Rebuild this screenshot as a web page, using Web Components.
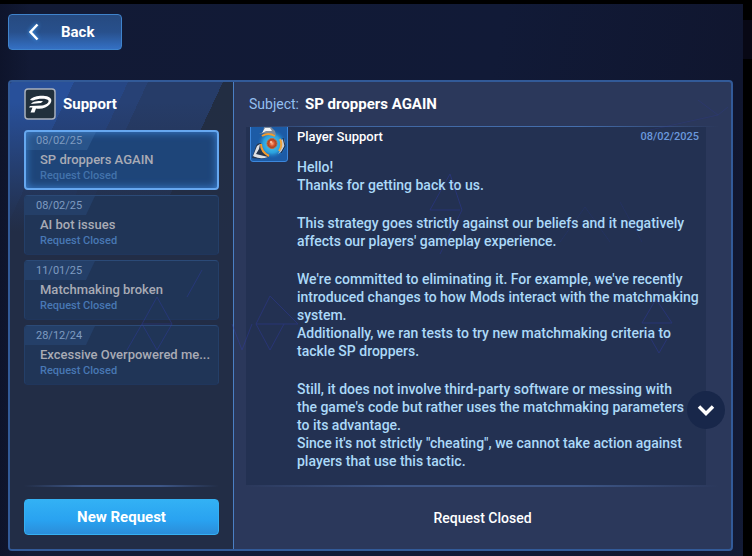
<!DOCTYPE html>
<html lang="en">
<head>
<meta charset="utf-8">
<meta name="viewport" content="width=device-width, initial-scale=1">
<title>Support</title>
<style>
	html, body {
		margin: 0;
	}
	body {
		font-family: Roboto, "Liberation Sans", sans-serif;
		font-size: 14px;
		font-weight: 500;
		color: #fff;
		background: linear-gradient(#000 20px, #080815 20px 59px, #000 59px);
	}
</style>
</head>
<body>
<support-screen>
	<back-button slot="nav">Back</back-button>
	<support-panel>
		<span slot="title">Support</span>
		<ticket-card slot="tickets" selected>
			<span slot="date">08/02/25</span>
			<span slot="subject">SP droppers AGAIN</span>
			<span slot="status">Request Closed</span>
		</ticket-card>
		<ticket-card slot="tickets">
			<span slot="date">08/02/25</span>
			<span slot="subject">AI bot issues</span>
			<span slot="status">Request Closed</span>
		</ticket-card>
		<ticket-card slot="tickets">
			<span slot="date">11/01/25</span>
			<span slot="subject">Matchmaking broken</span>
			<span slot="status">Request Closed</span>
		</ticket-card>
		<ticket-card slot="tickets">
			<span slot="date">28/12/24</span>
			<span slot="subject">Excessive Overpowered me...</span>
			<span slot="status">Request Closed</span>
		</ticket-card>
		<span slot="action">New Request</span>
		<span slot="subject">SP droppers AGAIN</span>
		<support-message slot="thread">
			<span slot="author">Player Support</span>
			<span slot="date">08/02/2025</span>
			<div>Hello!<br>Thanks for getting back to us.</div>
			<div>This strategy goes strictly against our beliefs and it negatively<br>affects our players' gameplay experience.</div>
			<div>We're committed to eliminating it. For example, we've recently<br>introduced changes to how Mods interact with the matchmaking<br>system.<br>Additionally, we ran tests to try new matchmaking criteria to<br>tackle SP droppers.</div>
			<div>Still, it does not involve third-party software or messing with<br>the game's code but rather uses the matchmaking parameters<br>to its advantage.<br>Since it's not strictly "cheating", we cannot take action against<br>players that use this tactic.</div>
		</support-message>
		<span slot="footer">Request Closed</span>
	</support-panel>
</support-screen>

<script>
/* Full window frame: black edges, navy background */
class SupportScreen extends HTMLElement {
	constructor() {
		super();
		this.attachShadow({ mode: "open" });
		this.shadowRoot.innerHTML = `
      <style>
        :host {
          display: flex;
          flex-direction: column;
          box-sizing: border-box;
          min-height: 100vh;
          margin-right: 9px;
          border-top: 4px solid #000;
          padding: 10px 10px 5px 8px;
          gap: 30px;
          background:
            linear-gradient(90deg, rgba(10, 14, 34, 0.5), transparent 30px),
            linear-gradient(100deg, #121a35, #111a37 60%, #10162f 90%, #131b36);
        }
        nav {
          display: flex;
        }
        main {
          display: flex;
          flex: 1;
        }
      </style>
      <nav><slot name="nav"></slot></nav>
      <main><slot></slot></main>
    `;
	}
}

class BackButton extends HTMLElement {
	constructor() {
		super();
		this.attachShadow({ mode: "open" });
		this.shadowRoot.innerHTML = `
      <style>
        :host {
          display: block;
        }
        button {
          display: flex;
          align-items: center;
          gap: 18px;
          box-sizing: border-box;
          width: 114px;
          height: 36px;
          padding: 0 16px;
          font: inherit;
          font-size: 15px;
          font-weight: 700;
          color: #fff;
          border: 1px solid #3f83cc;
          border-radius: 4px;
          background: linear-gradient(#264a80, #28508c 50%, #3470c4);
          cursor: pointer;
        }
        svg {
          filter: drop-shadow(0 0 2px #3fa4ff);
        }
      </style>
      <button type="button">
        <svg width="18" height="20" viewBox="0 0 18 20" aria-hidden="true">
          <path d="M12.500 2.500L5.500 10L12.500 17.500" fill="none" stroke="#fff" stroke-width="2.500"/>
        </svg>
        <slot></slot>
      </button>
    `;
	}
}

class TicketCard extends HTMLElement {
	constructor() {
		super();
		this.attachShadow({ mode: "open" });
		this.shadowRoot.innerHTML = `
      <style>
        :host {
          display: block;
        }
        button {
          display: flex;
          flex-direction: column;
          align-items: flex-start;
          box-sizing: border-box;
          width: 100%;
          height: 60px;
          padding: 0;
          overflow: hidden;
          font: inherit;
          text-align: left;
          color: #a9abb5;
          border: 1px solid #243f68;
          border-top-color: #2b4a77;
          border-bottom-color: #20365c;
          border-radius: 4px;
          background: #203557;
          cursor: pointer;
        }
        .date {
          box-sizing: border-box;
          width: 70px;
          height: 19px;
          padding-left: 11px;
          font-size: 11px;
          font-weight: 400;
          line-height: 20px;
          color: #7f9bc0;
          background: #243f68;
          clip-path: polygon(0 0, 100% 0, 61px 100%, 0 100%);
        }
        .subject {
          padding-left: 15px;
          font-size: 13px;
          line-height: 20px;
          white-space: nowrap;
        }
        .status {
          padding-left: 15px;
          font-size: 11px;
          line-height: 12px;
          color: #4878b4;
        }
        :host([selected]) button {
          border: 2px solid #66a8f0;
          background: #1e4579;
          box-shadow: inset 0 0 8px #3b82d4;
        }
        :host([selected]) .date {
          height: 18px;
          padding-left: 10px;
          line-height: 18px;
          background: rgba(75, 130, 190, 0.25);
        }
        :host([selected]) .subject,
        :host([selected]) .status {
          padding-left: 14px;
        }
        :host([selected]) .status {
          color: #4373ac;
        }
      </style>
      <button type="button">
        <span class="date"><slot name="date"></slot></span>
        <span class="subject"><slot name="subject"></slot></span>
        <span class="status"><slot name="status"></slot></span>
      </button>
    `;
	}

	connectedCallback() {
		this.addEventListener("click", () => {
			for (const card of this.parentElement.querySelectorAll("ticket-card")) {
				card.toggleAttribute("selected", card === this);
			}
		});
	}
}

class SupportMessage extends HTMLElement {
	constructor() {
		super();
		this.attachShadow({ mode: "open" });
		this.shadowRoot.innerHTML = `
      <style>
        :host {
          display: flex;
          align-items: flex-start;
          gap: 9px;
          padding: 0 7px 10px 4px;
        }
        .avatar {
          flex: none;
        }
        article {
          flex: 1;
          min-width: 0;
        }
        header {
          display: flex;
          justify-content: space-between;
          height: 20px;
          font-size: 13px;
          line-height: 20px;
        }
        time {
          font-size: 11px;
          color: #6a98dc;
        }
        .body {
          display: flex;
          flex-direction: column;
          gap: 20px;
          padding-top: 11px;
          line-height: 18px;
          color: #acd9f8;
        }
      </style>
      <svg class="avatar" width="38" height="35" viewBox="0 0 38 35" role="img" aria-label="Agent avatar">
        <defs>
          <radialGradient id="glow">
            <stop offset="0" stop-color="#4fd0f5"/>
            <stop offset="0.600" stop-color="#2b9fdc"/>
            <stop offset="1" stop-color="#1c62b0" stop-opacity="0"/>
          </radialGradient>
          <radialGradient id="core">
            <stop offset="0" stop-color="#ffb08a"/>
            <stop offset="0.500" stop-color="#d8552c"/>
            <stop offset="1" stop-color="#8c3a22"/>
          </radialGradient>
        </defs>
        <path d="M0.500 0V32Q0.500 34.500 3 34.500H35Q37.500 34.500 37.500 32V0" fill="#1c5ba6" stroke="#3d87dc"/>
        <circle cx="22" cy="17" r="15" fill="url(#glow)"/>
        <path d="M9 7L13 5L14 0H21L25 4L26 8L18 6Q13 6 9 7Z" fill="#7d8a9c"/>
        <path d="M12 6L15 1L20 1L22 4L16 4Z" fill="#f3f4f6"/>
        <path d="M12 9Q18 5 25 9" fill="none" stroke="#f39a2d" stroke-width="2"/>
        <path d="M2 31L6 19Q7 16 11 16Q9 22 14 26L19 30Q12 33 2 31Z" fill="#26364f"/>
        <path d="M3 29L7 19L10 17L9 22L6 27L14 29L18 30Q10 33 3 29Z" fill="#dde0e4"/>
        <path d="M11 17Q11 25 19 29" fill="none" stroke="#f39a2d" stroke-width="2"/>
        <path d="M30 24Q33 19 31 13L34 12L35 18L32 24L28 27Z" fill="#c6cbd2"/>
        <path d="M29 24Q33 18 30 12" fill="none" stroke="#f3a43a" stroke-width="2"/>
        <path d="M33 11L35 19L31 26" fill="none" stroke="#202b44"/>
        <circle cx="22" cy="16.500" r="5" fill="url(#core)" stroke="#c06a3c"/>
        <circle cx="21" cy="15" r="1" fill="#ffd0b0"/>
      </svg>
      <article>
        <header>
          <slot name="author"></slot>
          <time><slot name="date"></slot></time>
        </header>
        <div class="body"><slot></slot></div>
      </article>
    `;
	}
}

class SupportPanel extends HTMLElement {
	constructor() {
		super();
		this.attachShadow({ mode: "open" });
		this.shadowRoot.innerHTML = `
      <style>
        :host {
          position: relative;
          display: flex;
          flex: 1;
          min-width: 0;
          box-sizing: border-box;
          border: 2px solid #325a98;
          border-radius: 4px;
          overflow: hidden;
          background: #2b385b;
        }
        aside {
          display: flex;
          flex-direction: column;
          flex: none;
          box-sizing: border-box;
          width: 224px;
          padding: 6px 14px 14px 14px;
          border-right: 1px solid #4a7fc4;
          background:
            linear-gradient(rgba(34, 45, 70, 0) 20px, #222d46 150px),
            linear-gradient(115deg, #28509a 58px, #264684 58px 107px, #274175 107px 125px, #263c68 125px 193px, #222d42 193px) no-repeat 0 0 / 100% 170px,
            #222d46;
        }
        .brand {
          display: flex;
          align-items: center;
          gap: 7px;
          height: 32px;
          padding-bottom: 10px;
        }
        h1, h2 {
          margin: 0;
          font-size: 15px;
          font-weight: 700;
        }
        .tickets {
          display: flex;
          flex: 1;
          flex-direction: column;
          gap: 5px;
        }
        .rule {
          height: 2px;
          background: linear-gradient(90deg, transparent, #3d5687 30%, #3d5687 70%, transparent);
        }
        .new {
          height: 36px;
          margin-top: 12px;
          font: inherit;
          font-size: 15px;
          font-weight: 700;
          color: #fff;
          border: 1px solid #35b0f3;
          border-radius: 4px;
          background: linear-gradient(#33b1f4, #29a2f0 60%, #2b8dd9);
          cursor: pointer;
        }
        section {
          display: flex;
          flex: 1;
          flex-direction: column;
          min-width: 0;
        }
        .subject {
          display: flex;
          align-items: center;
          gap: 6px;
          height: 44px;
          padding-left: 15px;
        }
        .label {
          font-weight: 400;
          color: #93bff0;
        }
        .top-rule {
          margin: 0 12px;
          height: 1px;
          background: linear-gradient(90deg, transparent, #3f65a0 20%, #456fae 70%, transparent);
        }
        .thread {
          flex: 1;
          margin: 0 25px 0 12px;
          overflow: hidden;
          background: #233152;
        }
        .section-rule {
          margin: 0 12px;
        }
        footer {
          display: flex;
          align-items: center;
          justify-content: center;
          height: 62px;
        }
        .scroll {
          position: absolute;
          right: 6px;
          bottom: 120px;
          width: 38px;
          height: 38px;
          padding: 0;
          border: 0;
          border-radius: 50%;
          background: #18274a;
          cursor: pointer;
        }
        .scroll svg {
          display: block;
          margin: auto;
        }
        .pattern {
          position: absolute;
          inset: 0;
          pointer-events: none;
          opacity: 0.35;
        }
      </style>
      <aside>
        <div class="brand">
          <svg width="32" height="32" viewBox="0 0 32 32" aria-hidden="true">
            <rect x="1" y="1" width="30" height="30" rx="3" fill="#21303c" stroke="#a9b0bc" stroke-width="1.500"/>
            <path fill="#fff" d="M6 12C9 8 16 7.500 21 8C27 8.500 29 12 26 16C23 20 17 21.500 12 20.500L10.500 24.500H6.500L8.500 19.500L5 19.500L6 18L18 17.500C22 17 25 15 24.500 12.500C23 10 14 10 9 12.500Z"/>
            <path fill="#fff" d="M7 16C8 13.500 13 12.500 19 13L17 15C13 15 10 16 7 16Z"/>
          </svg>
          <h1><slot name="title"></slot></h1>
        </div>
        <div class="tickets"><slot name="tickets"></slot></div>
        <div class="rule"></div>
        <button class="new" type="button"><slot name="action"></slot></button>
      </aside>
      <section>
        <div class="subject">
          <span class="label">Subject:</span>
          <h2><slot name="subject"></slot></h2>
        </div>
        <div class="top-rule"></div>
        <div class="thread"><slot name="thread"></slot></div>
        <div class="rule section-rule"></div>
        <footer><slot name="footer"></slot></footer>
      </section>
      <svg class="pattern" width="721" height="467" fill="none" stroke="#333cb4" aria-hidden="true">
        <path d="M147 215L132 242H162ZM132 242L147 268L162 242M192 188L177 215M132 242L117 268M222 242L232 268L242 242"/>
        <path d="M246 242H288L260 214L246 242L260 268L274 242M420 128L440 92L452 128L430 172M420 128H450"/>
        <path d="M646 217L632 241H662ZM641 257L649 271L657 257"/>
        <path d="M550 160L575 125L600 160M610 120L632 160" opacity="0.400"/>
        <path d="M708 33L688 18M708 33L718 25M708 33L640 48" opacity="0.500"/>
      </svg>
      <button class="scroll" type="button" aria-label="Scroll down">
        <svg width="20" height="16" viewBox="0 0 20 16" aria-hidden="true">
          <path d="M3 4.500L10 11.500L17 4.500" fill="none" stroke="#fff" stroke-width="3.500"/>
        </svg>
      </button>
    `;
	}

	connectedCallback() {
		const thread = this.shadowRoot.querySelector(".thread");
		this.shadowRoot.querySelector(".scroll").addEventListener("click", () => {
			thread.scrollBy({ top: 100, behavior: "smooth" });
		});
	}
}

customElements.define("support-screen", SupportScreen);
customElements.define("back-button", BackButton);
customElements.define("ticket-card", TicketCard);
customElements.define("support-message", SupportMessage);
customElements.define("support-panel", SupportPanel);
</script>
</body>
</html>
